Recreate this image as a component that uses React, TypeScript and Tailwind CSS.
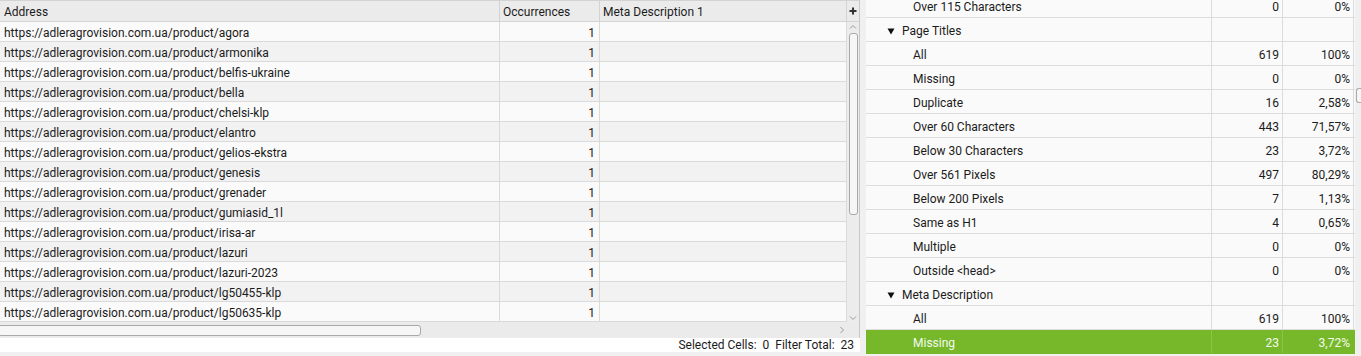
import React from "react";

const urls = [
  "agora",
  "armonika",
  "belfis-ukraine",
  "bella",
  "chelsi-klp",
  "elantro",
  "gelios-ekstra",
  "genesis",
  "grenader",
  "gumiasid_1l",
  "irisa-ar",
  "lazuri",
  "lazuri-2023",
  "lg50455-klp",
  "lg50635-klp",
];

type Row = { label: string; n?: string; p?: string; group?: boolean; sel?: boolean };

const rows: Row[] = [
  { label: "Over 115 Characters", n: "0", p: "0%" },
  { label: "Page Titles", group: true },
  { label: "All", n: "619", p: "100%" },
  { label: "Missing", n: "0", p: "0%" },
  { label: "Duplicate", n: "16", p: "2,58%" },
  { label: "Over 60 Characters", n: "443", p: "71,57%" },
  { label: "Below 30 Characters", n: "23", p: "3,72%" },
  { label: "Over 561 Pixels", n: "497", p: "80,29%" },
  { label: "Below 200 Pixels", n: "7", p: "1,13%" },
  { label: "Same as H1", n: "4", p: "0,65%" },
  { label: "Multiple", n: "0", p: "0%" },
  { label: "Outside <head>", n: "0", p: "0%" },
  { label: "Meta Description", group: true },
  { label: "All", n: "619", p: "100%" },
  { label: "Missing", n: "23", p: "3,72%", sel: true },
];

function Tri() {
  return (
    <svg width="8" height="7" viewBox="0 0 8 7" className="mr-[7px] shrink-0">
      <path d="M0.5 0.5 H7.5 L4 6.5 Z" fill="#111" />
    </svg>
  );
}

export default function App() {
  return (
    <div
      className="flex w-[1361px] h-[356px] overflow-hidden bg-[#f0f0f0] text-[12px] text-[#1b1b1b]"
      style={{ fontFamily: "Roboto, 'Liberation Sans', sans-serif" }}
    >
      {/* Left pane */}
      <div className="flex flex-col w-[860px] shrink-0">
        <div className="flex h-[322px]">
          <div className="flex flex-col w-[846px]">
            <div className="flex h-[22px] bg-[#ebebeb] border-t border-b border-[#d3d3d3]">
              <div className="w-[500px] pl-[4px] pt-[3px] leading-[17px] border-r border-[#d3d3d3]">Address</div>
              <div className="w-[100px] pl-[3px] pt-[3px] leading-[17px] border-r border-[#d3d3d3]">Occurrences</div>
              <div className="flex-1 pl-[3px] pt-[3px] leading-[17px]">Meta Description 1</div>
            </div>
            {urls.map((u, i) => (
              <div
                key={u}
                className={`flex h-[20px] border-b border-[#dadada] ${
                  i % 2 === 1 ? "bg-[#f2f2f2]" : "bg-[#fafafa]"
                }`}
              >
                <div className="w-[500px] pl-[4px] pt-[3px] leading-[16px] border-r border-[#dadada] whitespace-nowrap">
                  https://adleragrovision.com.ua/product/{u}
                </div>
                <div className="w-[100px] pr-[4px] pt-[3px] leading-[16px] text-right border-r border-[#dadada]">1</div>
                <div className="flex-1" />
              </div>
            ))}
          </div>
          <div className="flex flex-col w-[14px] border-r border-[#c8c8c8] bg-[#ececec]">
            <div className="h-[22px] flex items-center justify-center border-t border-b border-l border-[#d3d3d3] bg-[#ebebeb]">
              <svg width="8" height="8" viewBox="0 0 8 8">
                <path d="M4 0.5V7.5M0.5 4H7.5" stroke="#333" strokeWidth="2" />
              </svg>
            </div>
            <div className="flex-1 flex flex-col items-center border-l border-[#dcdcdc]">
              <svg width="8" height="6" viewBox="0 0 8 6" className="mt-[2px]">
                <path d="M1 4.5L4 1.5L7 4.5" stroke="#9a9a9a" fill="none" strokeWidth="1" />
              </svg>
              <div className="mt-[3px] w-[9px] h-[182px] rounded-[3px] border border-[#a9a9a9] bg-[#f6f6f6]" />
              <div className="flex-1" />
              <svg width="8" height="6" viewBox="0 0 8 6" className="mb-[1px]">
                <path d="M1 1.5L4 4.5L7 1.5" stroke="#9a9a9a" fill="none" strokeWidth="1" />
              </svg>
            </div>
          </div>
        </div>
        <div className="flex items-center h-[16px] bg-[#ebebeb] border-r border-[#c8c8c8]">
          <div className="w-[423px] h-[11px] -ml-[2px] rounded-[3px] border border-[#a9a9a9] bg-[#f6f6f6]" />
          <div className="flex-1" />
          <svg width="6" height="8" viewBox="0 0 6 8" className="mr-[14px]">
            <path d="M1.5 1L4.5 4L1.5 7" stroke="#9a9a9a" fill="none" strokeWidth="1" />
          </svg>
        </div>
        <div className="h-[14px] bg-white pt-[1px] leading-[13px] text-right pr-[6px] whitespace-pre">
          Selected Cells:  0  Filter Total:  23
        </div>
        <div className="flex-1 bg-[#f0f0f0]" />
      </div>

      {/* Separator */}
      <div className="w-[6px] shrink-0 bg-[#f0f0f0]" />

      {/* Right pane */}
      <div className="flex flex-col w-[489px] shrink-0 overflow-hidden">
        <div className="-mt-[6px] flex flex-col">
          {rows.map((r, i) => (
            <div
              key={i}
              className={`flex h-[24px] border-b ${
                r.sel
                  ? "bg-[#77b82b] text-[#f4faee] border-[#77b82b]"
                  : "bg-[#fafafa] border-[#dcdcdc]"
              }`}
            >
              <div
                className={`w-[346px] flex items-center pt-[3px] border-r ${
                  r.sel ? "border-[#8cc44a]" : "border-[#dcdcdc]"
                } ${r.group ? "pl-[21px]" : "pl-[47px]"}`}
              >
                {r.group && <Tri />}
                <span className="leading-[20px]">{r.label}</span>
              </div>
              <div
                className={`w-[71px] text-right pr-[3px] pt-[3px] leading-[20px] border-r ${
                  r.sel ? "border-[#8cc44a]" : "border-[#dcdcdc]"
                }`}
              >
                {r.n ?? ""}
              </div>
              <div
                className={`w-[71px] text-right pr-[3px] pt-[3px] leading-[20px] border-r ${
                  r.sel ? "border-[#77b82b]" : "border-[#dcdcdc]"
                }`}
              >
                {r.p ?? ""}
              </div>
            </div>
          ))}
        </div>
      </div>

      {/* Right scrollbar stub */}
      <div className="flex-1 flex flex-col bg-[#f0f0f0]">
        <div className="h-[88px]" />
        <div className="ml-[1px] h-[15px] rounded-l-[3px] border border-r-0 border-[#a9a9a9] bg-[#f6f6f6]" />
      </div>
    </div>
  );
}
